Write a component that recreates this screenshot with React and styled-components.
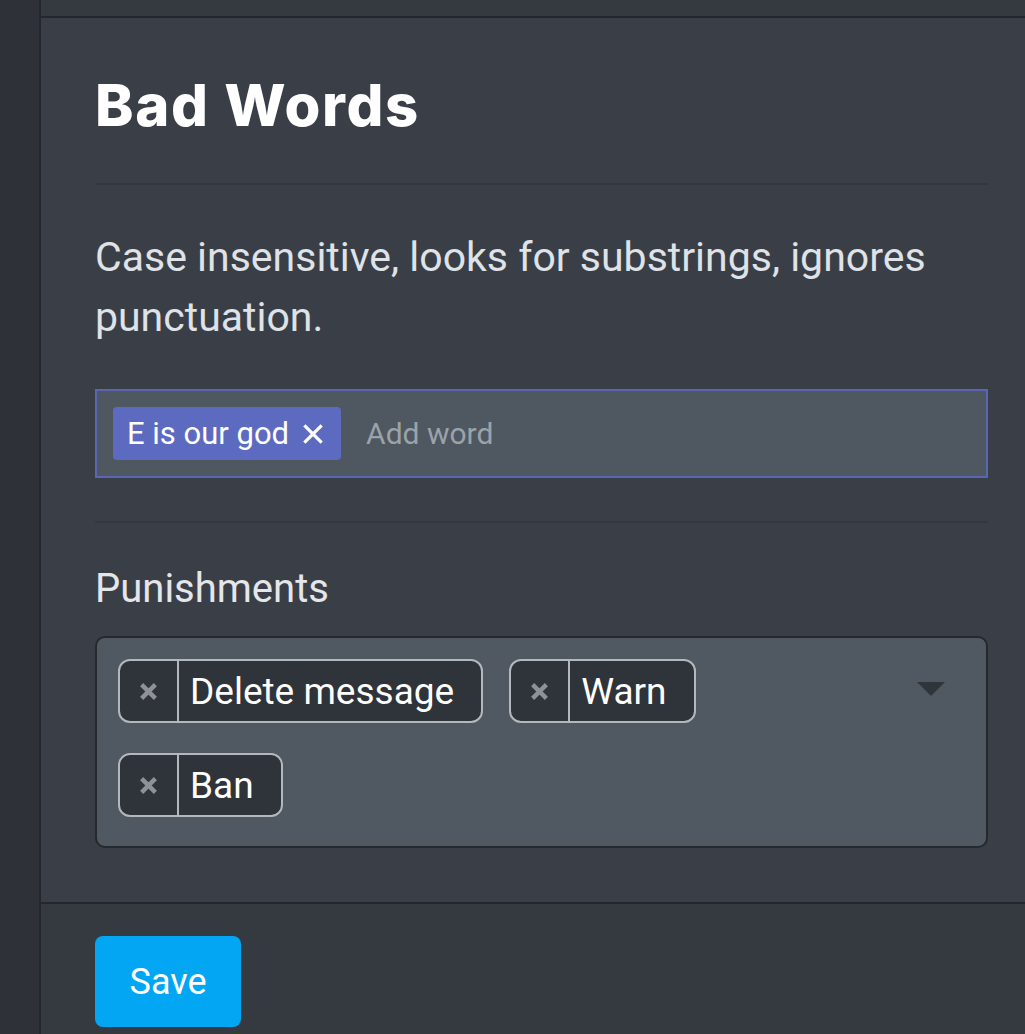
import React from 'react'
import styled, { createGlobalStyle } from 'styled-components'

const GlobalStyle = createGlobalStyle`
  html, body {
    margin: 0;
    padding: 0;
    background: #3a3f47;
  }
  body {
    font-family: Roboto, "Liberation Sans", sans-serif;
    overflow: hidden;
  }
`

const Page = styled.div`
  display: flex;
  min-height: 100vh;
`

const Sidebar = styled.aside`
  width: 39px;
  flex-shrink: 0;
  background: #2e3238;
  border-right: 2px solid #24282c;
`

const Main = styled.main`
  flex: 1;
  display: flex;
  flex-direction: column;
  min-width: 0;
`

const TopBar = styled.div`
  height: 16px;
  background: #353a41;
  border-bottom: 2px solid #24282c;
`

const Panel = styled.section`
  background: #3a3f47;
  padding: 52px 37px 54px 54px;
  border-bottom: 2px solid #24282c;
`

const Title = styled.h1`
  margin: 0;
  font-family: Inter, "Open Sans", sans-serif;
  font-weight: 800;
  font-size: 58px;
  line-height: 70px;
  letter-spacing: 1.7px;
  color: #ffffff;
`

const Divider = styled.hr`
  margin: ${p => p.$top}px 0 0;
  border: none;
  height: 2px;
  background: #33383e;
`

const Description = styled.p`
  margin: 42px 0 0;
  font-size: 41px;
  line-height: 60px;
  color: #dfe2e6;
`

const WordInput = styled.div`
  margin-top: 42px;
  display: flex;
  align-items: center;
  gap: 25px;
  height: 85px;
  padding: 0 16px;
  background: #4f5760;
  border: 2px solid #5a66b4;
`

const WordTag = styled.span`
  display: inline-flex;
  align-items: center;
  gap: 12px;
  height: 53px;
  padding: 0 16px 0 14px;
  border-radius: 4px;
  background: #5c6bc0;
  color: #ffffff;
  font-size: 31px;
`

const Placeholder = styled.span`
  font-size: 30px;
  color: #9aa3aa;
`

const Label = styled.div`
  margin-top: 42px;
  font-size: 40px;
  line-height: 47px;
  color: #e3e6ea;
`

const SelectBox = styled.div`
  margin-top: 24px;
  display: flex;
  background: #505962;
  border: 2px solid #25292d;
  border-radius: 10px;
  min-height: 212px;
  box-sizing: border-box;
`

const Values = styled.div`
  flex: 1;
  display: flex;
  flex-wrap: wrap;
  align-content: flex-start;
  gap: 30px 26px;
  padding: 21px 0 29px 21px;
  max-width: 765px;
`

const Chip = styled.div`
  display: flex;
  height: 64px;
  box-sizing: border-box;
  border: 2px solid #b4b8bc;
  border-radius: 12px;
  background: #2f333a;
  overflow: hidden;
`

const ChipRemove = styled.span`
  width: 57px;
  display: flex;
  align-items: center;
  justify-content: center;
  border-right: 2px solid #b4b8bc;
`

const ChipLabel = styled.span`
  display: flex;
  align-items: center;
  padding: 0 27px 0 11px;
  font-size: 37px;
  color: #ffffff;
`

const Indicator = styled.div`
  width: 110px;
  margin-left: auto;
  display: flex;
  justify-content: center;
  padding-top: 44px;
`

const Footer = styled.footer`
  flex: 1;
  background: #353a41;
  padding: 32px 0 0 54px;
`

const SaveButton = styled.button`
  width: 146px;
  height: 91px;
  border: none;
  border-radius: 8px;
  background: #03a6f3;
  color: #ffffff;
  font-family: Roboto, "Liberation Sans", sans-serif;
  font-size: 36px;
  cursor: pointer;
`

const CloseIcon = ({ size = 19, color = '#8e9296', width = 4.2 }) => (
  <svg width={size} height={size} viewBox="0 0 18 18">
    <path d="M2.5 2.5 L15.5 15.5 M15.5 2.5 L2.5 15.5" stroke={color} strokeWidth={width} strokeLinecap="butt" />
  </svg>
)

const punishments = ['Delete message', 'Warn', 'Ban']

const App = () => (
  <>
    <GlobalStyle />
    <Page>
      <Sidebar />
      <Main>
        <TopBar />
        <Panel>
          <Title>Bad Words</Title>
          <Divider $top={43} />
          <Description>Case insensitive, looks for substrings, ignores punctuation.</Description>
          <WordInput>
            <WordTag>
              E is our god
              <CloseIcon size={24} color="#ffffff" width={2.4} />
            </WordTag>
            <Placeholder>Add word</Placeholder>
          </WordInput>
          <Divider $top={43} />
          <Label>Punishments</Label>
          <SelectBox>
            <Values>
              {punishments.map(p => (
                <Chip key={p}>
                  <ChipRemove><CloseIcon /></ChipRemove>
                  <ChipLabel>{p}</ChipLabel>
                </Chip>
              ))}
            </Values>
            <Indicator>
              <svg width="28" height="14" viewBox="0 0 28 14">
                <path d="M0 0 H28 L14 14 Z" fill="#30343b" />
              </svg>
            </Indicator>
          </SelectBox>
        </Panel>
        <Footer>
          <SaveButton>Save</SaveButton>
        </Footer>
      </Main>
    </Page>
  </>
)

export default App
